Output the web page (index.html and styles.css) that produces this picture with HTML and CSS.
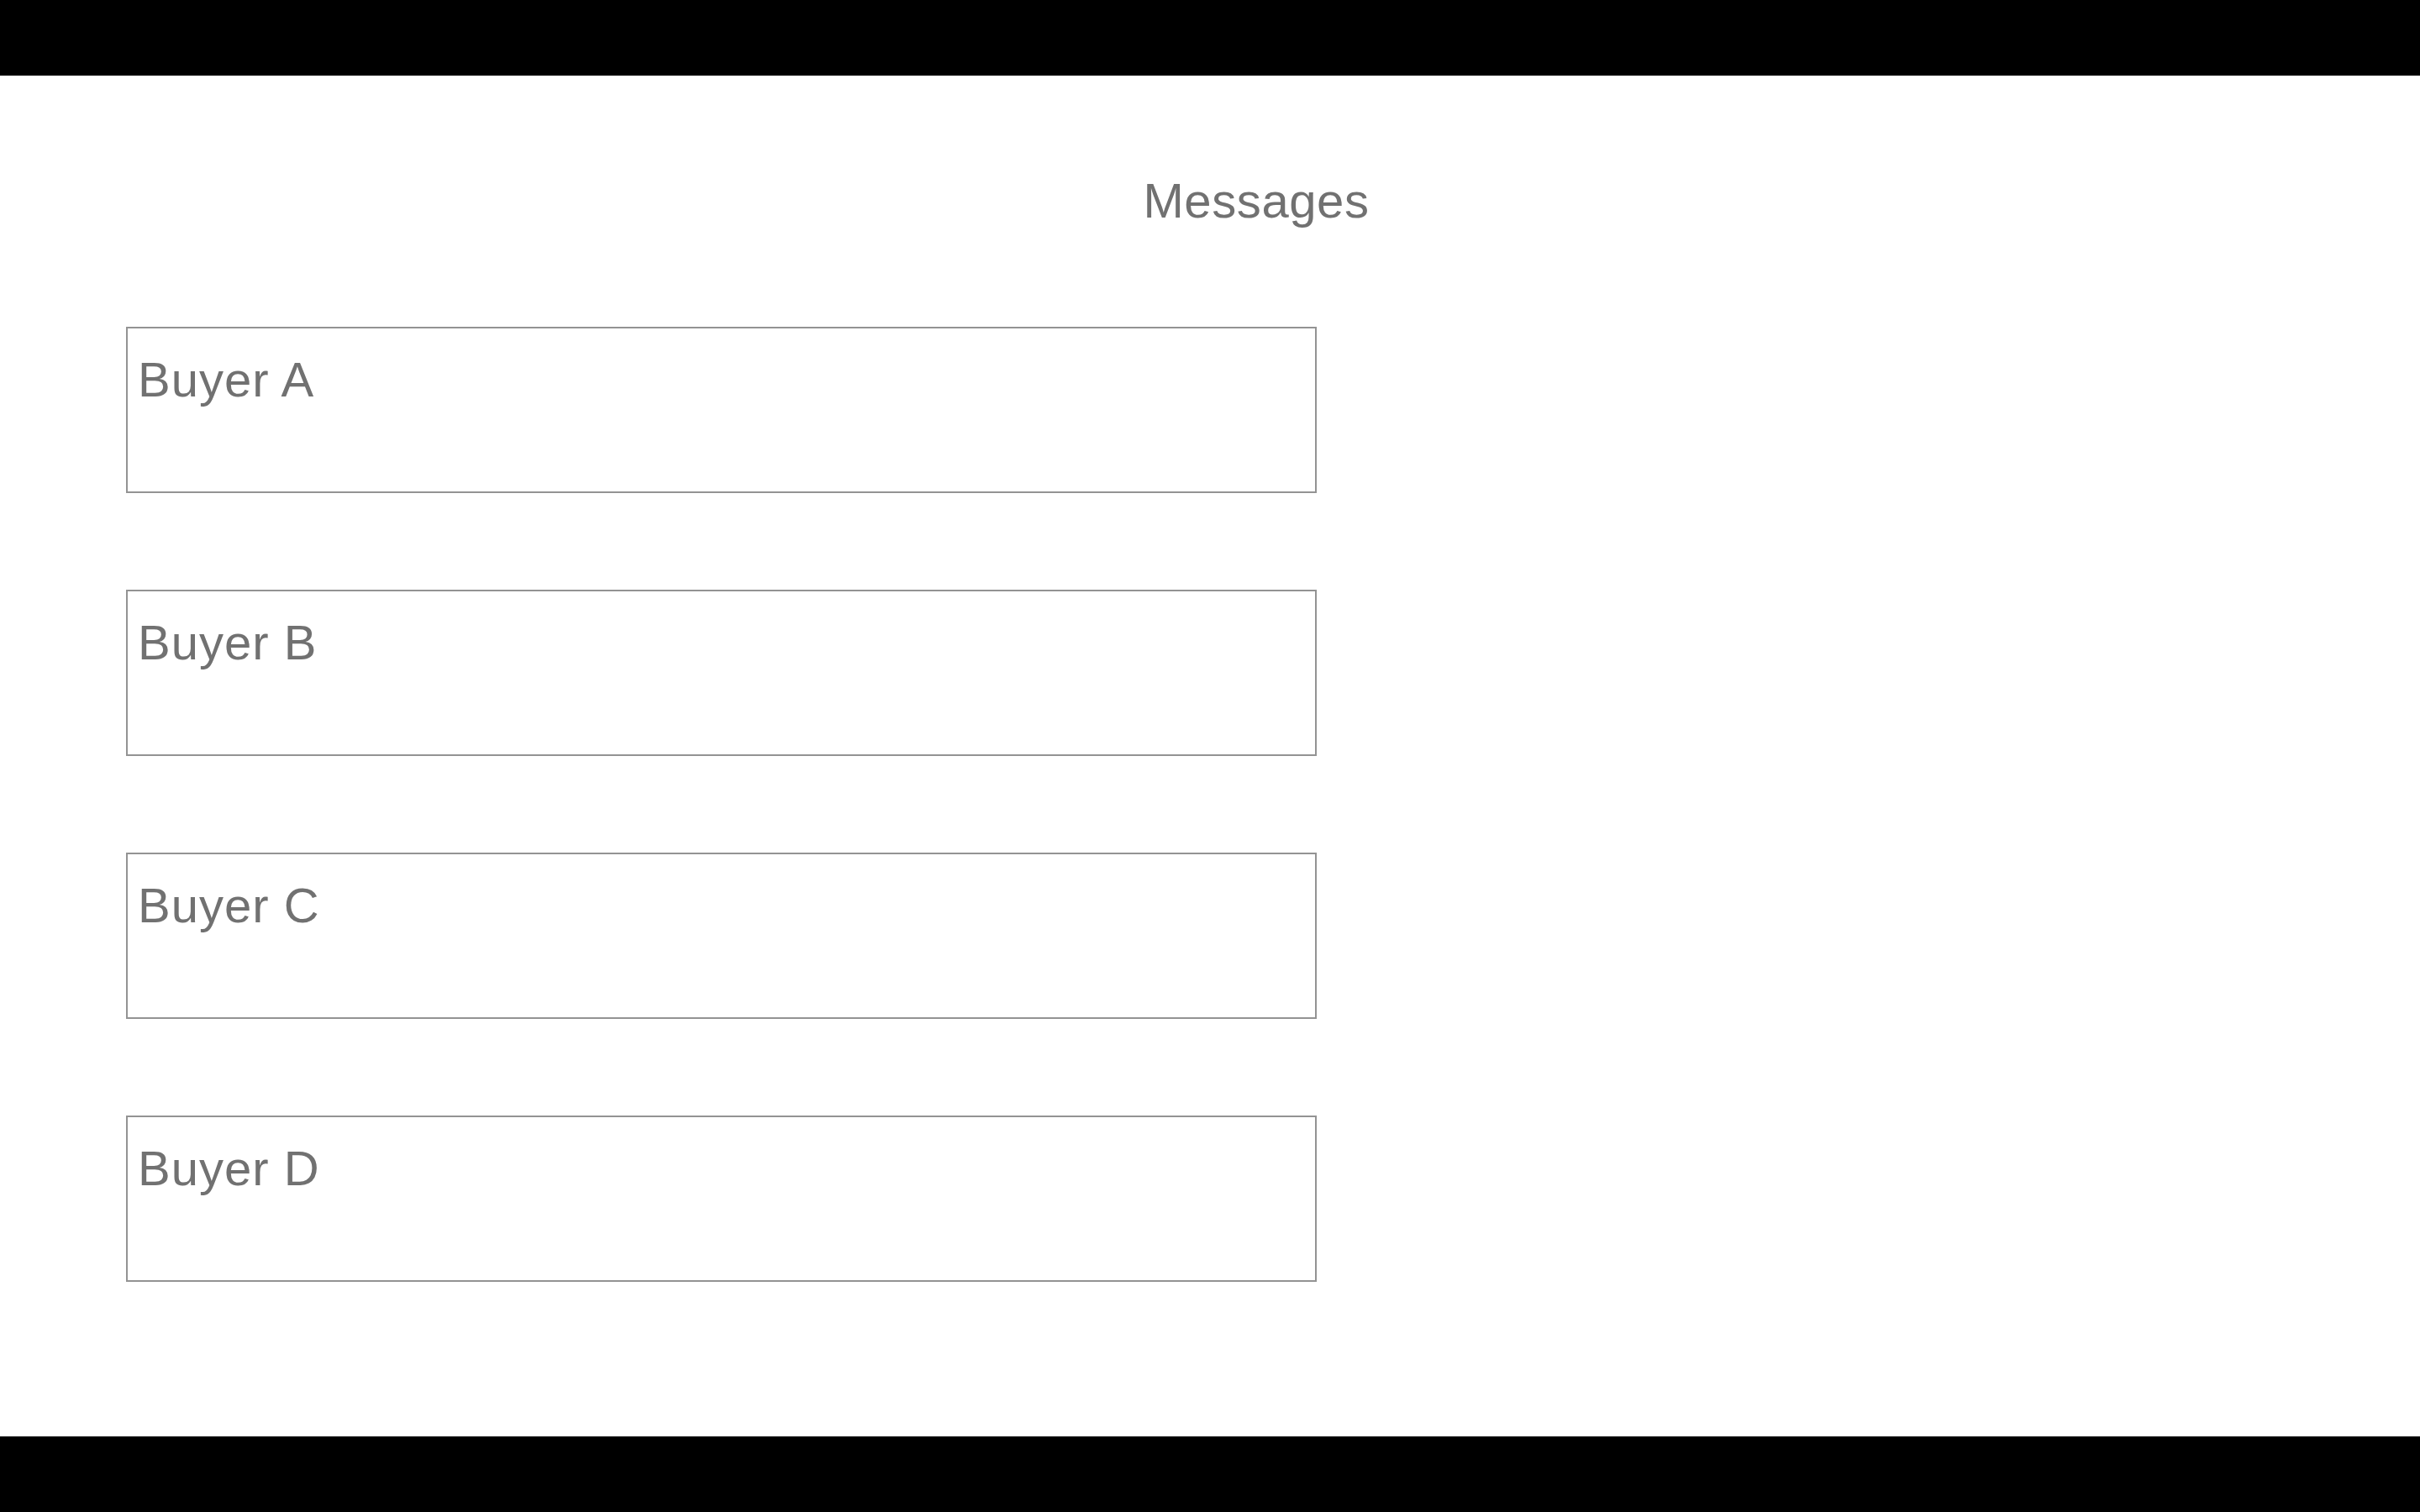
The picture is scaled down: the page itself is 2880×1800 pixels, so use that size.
FILE: index.html
```html
<!DOCTYPE html>
<html>
<head>
<meta charset="utf-8">
<link rel="stylesheet" href="styles.css">
</head>
<body>
<div class="page">
  <div class="bar"></div>
  <main class="content">
    <h1 class="title">Messages</h1>
    <div class="list">
      <div class="card">Buyer A</div>
      <div class="card">Buyer B</div>
      <div class="card">Buyer C</div>
      <div class="card">Buyer D</div>
    </div>
  </main>
  <div class="bar"></div>
</div>
</body>
</html>
```
FILE: styles.css
```css
html, body {
  margin: 0;
  padding: 0;
  background: #ffffff;
}
.page {
  width: 2880px;
  height: 1800px;
  display: flex;
  flex-direction: column;
  font-family: "Liberation Sans", Arial, sans-serif;
  color: #717171;
}
.bar {
  height: 90px;
  background: #000000;
  flex: none;
}
.content {
  flex: 1;
  display: flex;
  flex-direction: column;
  padding-top: 120px;
}
.title {
  margin: 0;
  font-size: 58px;
  line-height: 58px;
  font-weight: normal;
  letter-spacing: 0.6px;
  text-align: center;
  padding-left: 110px;
}
.list {
  margin-top: 121px;
  margin-left: 150px;
  display: flex;
  flex-direction: column;
  gap: 115px;
}
.card {
  box-sizing: border-box;
  width: 1417px;
  height: 198px;
  border: 2px solid #939393;
  padding: 32px 0 0 12px;
  font-size: 58px;
  line-height: 58px;
  letter-spacing: 1px;
}
```
